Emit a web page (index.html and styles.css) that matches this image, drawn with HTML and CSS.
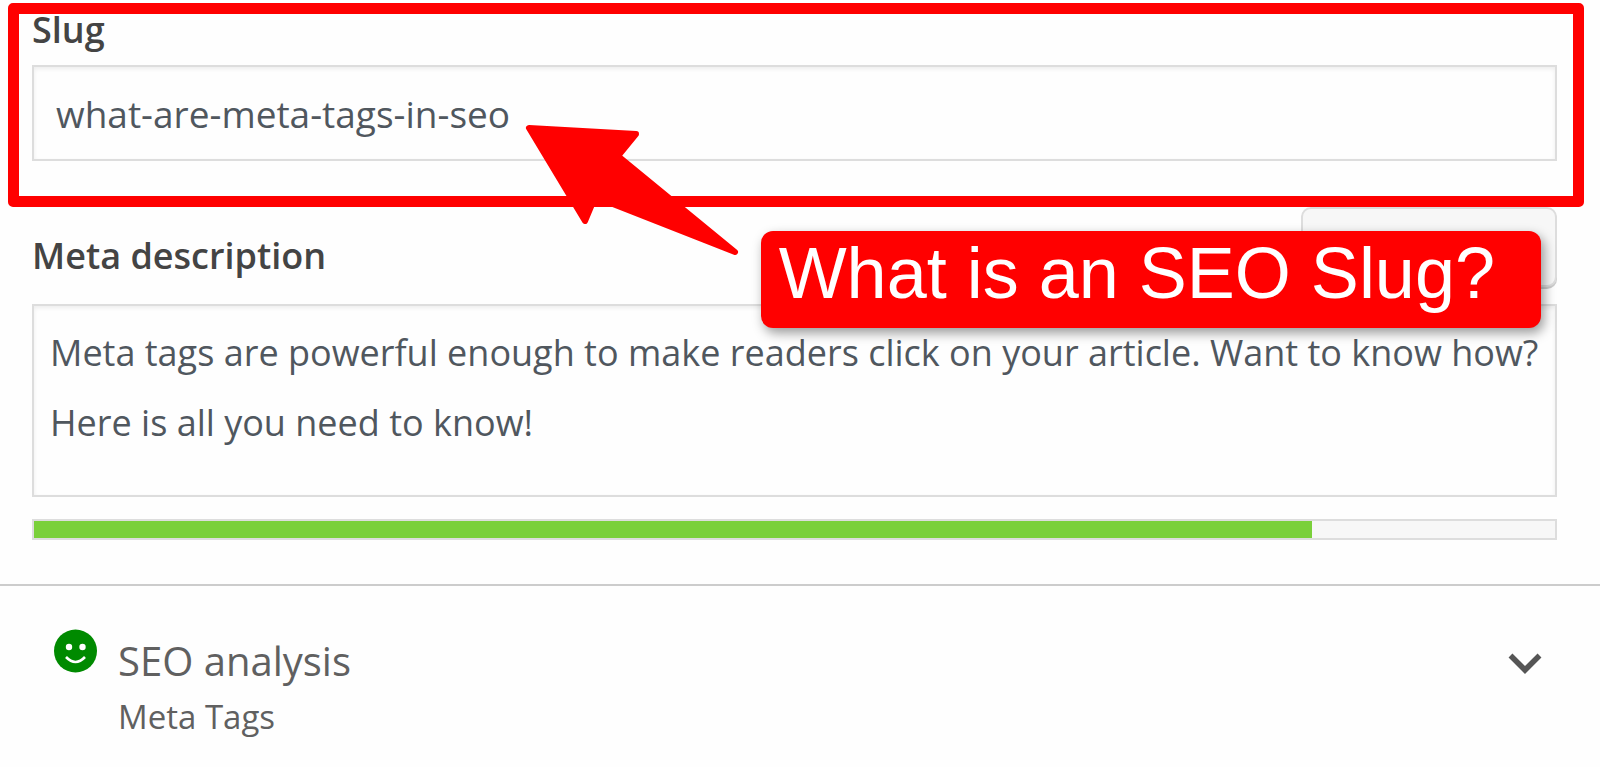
FILE: index.html
```
<!DOCTYPE html>
<html lang="en">
<head>
  <meta charset="UTF-8" />
  <meta name="viewport" content="width=device-width, initial-scale=1.0"/>
  <title>Slug</title>
  <link rel="stylesheet" href="styles.css">
</head>
<body>

  <div class="editor">
    <div class="slug-box">
      <label for="slug">Slug</label>
      <input type="text" id="slug" value="what-are-meta-tags-in-seo">
      <svg class="arrow" viewBox="0 0 224 140" aria-hidden="true">
        <path d="M10 8 L117 14 L99 36 L216 132 L76 77 L66 101 Z"/>
      </svg>
    </div>

    <div class="meta">
      <div class="meta-head">
        <label for="description">Meta description</label>
        <button class="snippet" aria-label="Insert variable"></button>
        <div class="callout">What is an SEO Slug?</div>
      </div>
      <textarea id="description">Meta tags are powerful enough to make readers click on your article. Want to know how? Here is all you need to know!</textarea>
      <div class="progress">
        <div class="progress-fill" style="width: 84%"></div>
      </div>
    </div>

    <button class="analysis">
      <svg class="smiley" viewBox="0 0 44 44" aria-hidden="true">
        <circle cx="21.5" cy="22" r="21.5" fill="#008a00"/>
        <circle cx="15" cy="18" r="3.2" fill="#fff"/>
        <circle cx="28.500" cy="18" r="3.2" fill="#fff"/>
        <path d="M12 28 Q21.500 38 31 28" fill="none" stroke="#fff" stroke-width="2.6"/>
      </svg>
      <span class="analysis-text">
        <span class="title">SEO analysis</span>
        <span class="keyword">Meta Tags</span>
      </span>
      <svg class="chevron" viewBox="0 0 34 22" aria-hidden="true">
        <path d="M2.500 2.500 L17 17 L31.500 2.500" fill="none" stroke="#555" stroke-width="5.5"/>
      </svg>
    </button>
  </div>

</body>
</html>
```

FILE: styles.css
```
* {
  box-sizing: border-box;
}

body {
  margin: 0;
  background: #fefefe;
  font-family: "Open Sans", "Noto Sans", sans-serif;
  color: #444;
}

.editor {
  padding-top: 3px;
}

label {
  display: block;
  font-size: 36px;
  font-weight: 600;
  line-height: 48px;
}

input,
textarea {
  display: block;
  width: 100%;
  border: 2px solid #ddd;
  background: #fefefe;
  box-shadow: inset 0 2px 4px rgba(0,0,0,0.07);
  font-family: inherit;
  font-size: 36px;
  color: #50575e;
}

.slug-box {
  position: relative;
  margin: 0 16px 0 8px;
  padding: 0 16px 35px 13px;
  border: 11px solid #f00;
  border-radius: 5px;
}

.slug-box label {
  padding-bottom: 19px;
  line-height: 32px;
}

.slug-box input {
  height: 96px;
  padding: 0 22px;
  font-size: 37px;
}

.arrow {
  position: absolute;
  z-index: 2;
  left: 500px;
  top: 106px;
  width: 224px;
  height: 140px;
  fill: #f00;
  stroke: #f00;
  stroke-width: 6;
  stroke-linejoin: round;
}

.meta {
  padding: 0 43px 44px 32px;
}

.meta-head {
  position: relative;
  display: flex;
  justify-content: space-between;
  align-items: center;
  height: 97px;
}

.snippet {
  align-self: flex-start;
  width: 256px;
  height: 80px;
  border: 2px solid #ddd;
  border-radius: 10px;
  background: #f7f7f7;
  box-shadow: 0 2px 0 #ccc;
}

.callout {
  position: absolute;
  z-index: 1;
  top: 24px;
  right: 16px;
  height: 97px;
  padding: 0 46px 0 18px;
  border-radius: 12px;
  background: #f00;
  box-shadow: 3px 5px 12px rgba(0,0,0,0.4);
  color: #fff;
  font-family: "Liberation Sans", Arial, sans-serif;
  font-size: 72px;
  line-height: 84px;
  white-space: nowrap;
}

textarea {
  height: 193px;
  padding: 12px 16px;
  line-height: 70px;
  resize: none;
  overflow: hidden;
}

.progress {
  height: 21px;
  margin-top: 22px;
  border: 2px solid #ddd;
  background: #f7f7f7;
}

.progress-fill {
  height: 100%;
  background: #7ad03a;
}

.analysis {
  display: flex;
  align-items: flex-start;
  width: 100%;
  padding: 43px 58px 16px 54px;
  border: none;
  border-top: 2px solid #ccc;
  background: none;
  color: #606060;
  font-family: inherit;
  text-align: left;
}

.smiley {
  width: 44px;
  height: 44px;
}

.analysis-text {
  flex: 1;
  margin-left: 20px;
}

.title,
.keyword {
  display: block;
}

.title {
  font-size: 40px;
  line-height: 64px;
}

.keyword {
  font-size: 33px;
  line-height: 48px;
}

.chevron {
  width: 34px;
  height: 22px;
  margin-top: 24px;
}
```
